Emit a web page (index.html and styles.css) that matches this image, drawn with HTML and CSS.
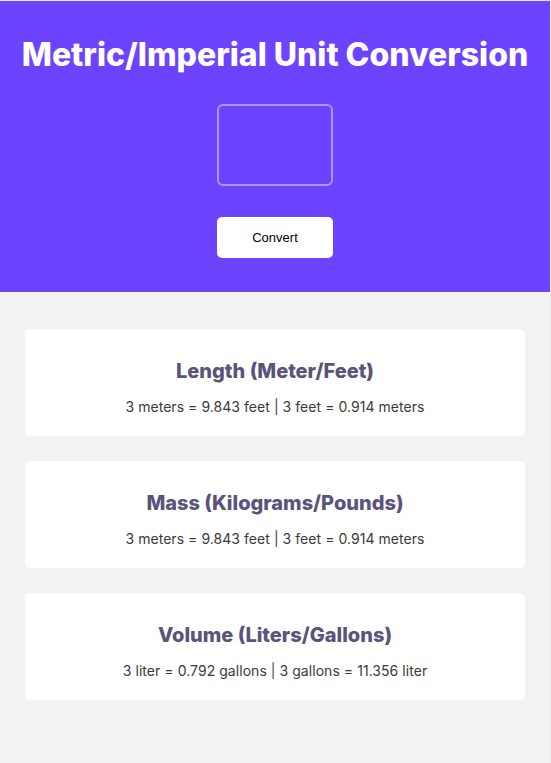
FILE: index.html
```html
<!DOCTYPE html>
<html lang="en">
<head>
<meta charset="UTF-8">
<title>Metric/Imperial Unit Conversion</title>
<link rel="stylesheet" href="styles.css">
</head>
<body>
<div class="page">
  <header class="hero">
    <h1 class="hero-title">Metric/Imperial Unit Conversion</h1>
    <input class="hero-input" type="number" aria-label="Value">
    <button class="hero-btn" type="button">Convert</button>
  </header>
  <main class="results">
    <section class="card">
      <h2 class="card-title">Length (Meter/Feet)</h2>
      <p class="card-text">3 meters = 9.843 feet | 3 feet = 0.914 meters</p>
    </section>
    <section class="card">
      <h2 class="card-title">Mass (Kilograms/Pounds)</h2>
      <p class="card-text">3 meters = 9.843 feet | 3 feet = 0.914 meters</p>
    </section>
    <section class="card">
      <h2 class="card-title">Volume (Liters/Gallons)</h2>
      <p class="card-text">3 liter = 0.792 gallons | 3 gallons = 11.356 liter</p>
    </section>
  </main>
</div>
</body>
</html>
```

FILE: styles.css
```css
html {
  background: #ffffff;
}
body {
  margin: 0;
  padding-top: 1px;
  background: #e9e9e9;
  font-family: Inter, "Noto Sans", sans-serif;
}
.page {
  width: 550px;
  min-height: 762px;
  background: #f2f2f2;
}
.hero {
  background: #6c43ff;
  padding: 34px 0 34px;
  display: flex;
  flex-direction: column;
  align-items: center;
}
.hero-title {
  margin: 0;
  color: #ffffff;
  font-size: 32px;
  font-weight: 800;
  line-height: 39px;
}
.hero-input {
  margin-top: 30px;
  box-sizing: border-box;
  width: 116px;
  height: 82px;
  background: transparent;
  border: 2px solid rgba(255, 255, 255, 0.45);
  border-radius: 6px;
  outline: none;
}
.hero-btn {
  margin-top: 31px;
  width: 116px;
  height: 41px;
  border: none;
  border-radius: 5px;
  background: #ffffff;
  color: #000000;
  font-family: "Liberation Sans", Arial, sans-serif;
  font-size: 13px;
}
.results {
  padding: 37px 25px 50px;
  display: flex;
  flex-direction: column;
  gap: 25px;
}
.card {
  background: #ffffff;
  border-radius: 5px;
  height: 107px;
  box-sizing: border-box;
  padding-top: 30px;
  text-align: center;
}
.card-title {
  margin: 0;
  color: #5a537b;
  font-size: 20px;
  font-weight: 800;
  line-height: 24px;
}
.card-text {
  margin: 14px 0 0;
  color: #3a3a3a;
  font-size: 14px;
  line-height: 20px;
  letter-spacing: 0.05px;
}
```
